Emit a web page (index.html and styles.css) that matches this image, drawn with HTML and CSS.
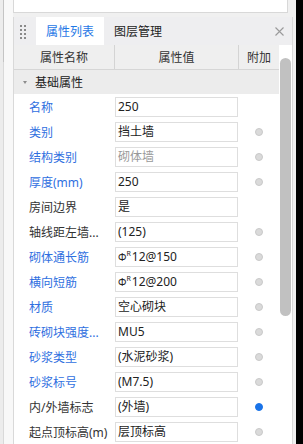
FILE: index.html
```html
<!DOCTYPE html>
<html>
<head>
<meta charset="utf-8">
<link rel="stylesheet" href="styles.css">
</head>
<body>
<div class="gutter"><div class="gutter-dark"></div></div>
<div class="main">
  <div class="top-panel"></div>
  <div class="panel">
    <div class="tabbar">
      <div class="grip"><i></i><i></i><i></i><i></i><i></i><i></i><i></i><i></i></div>
      <div class="tab active">属性列表</div>
      <div class="tab">图层管理</div>
      <div class="close"><svg width="9" height="9" viewBox="0 0 9 9"><path d="M0.5 0.5 L8.5 8.5 M8.5 0.5 L0.5 8.5" stroke="#9a9a9a" stroke-width="1.1" fill="none"/></svg></div>
    </div>
    <div class="content">
      <div class="table">
        <div class="thead">
          <div class="th c1">属性名称</div>
          <div class="th c2">属性值</div>
          <div class="th c3">附加</div>
        </div>
        <div class="group"><span class="caret"></span>基础属性</div>
        <div class="row"><div class="name blue">名称</div><div class="val"><div class="input">250</div></div><div class="extra"></div></div>
        <div class="row"><div class="name blue">类别</div><div class="val"><div class="input">挡土墙</div></div><div class="extra"><span class="dot"></span></div></div>
        <div class="row"><div class="name blue">结构类别</div><div class="val"><div class="input muted">砌体墙</div></div><div class="extra"><span class="dot"></span></div></div>
        <div class="row"><div class="name blue">厚度(mm)</div><div class="val"><div class="input">250</div></div><div class="extra"><span class="dot"></span></div></div>
        <div class="row"><div class="name">房间边界</div><div class="val"><div class="input">是</div></div><div class="extra"></div></div>
        <div class="row"><div class="name">轴线距左墙...</div><div class="val"><div class="input">(125)</div></div><div class="extra"><span class="dot"></span></div></div>
        <div class="row"><div class="name blue">砌体通长筋</div><div class="val"><div class="input"><span class="phi">Φ</span><sup class="r">R</sup>12@150</div></div><div class="extra"><span class="dot"></span></div></div>
        <div class="row"><div class="name blue">横向短筋</div><div class="val"><div class="input"><span class="phi">Φ</span><sup class="r">R</sup>12@200</div></div><div class="extra"><span class="dot"></span></div></div>
        <div class="row"><div class="name blue">材质</div><div class="val"><div class="input">空心砌块</div></div><div class="extra"><span class="dot"></span></div></div>
        <div class="row"><div class="name blue">砖砌块强度...</div><div class="val"><div class="input">MU5</div></div><div class="extra"><span class="dot"></span></div></div>
        <div class="row"><div class="name blue">砂浆类型</div><div class="val"><div class="input">(水泥砂浆)</div></div><div class="extra"><span class="dot"></span></div></div>
        <div class="row"><div class="name blue">砂浆标号</div><div class="val"><div class="input">(M7.5)</div></div><div class="extra"><span class="dot"></span></div></div>
        <div class="row"><div class="name">内/外墙标志</div><div class="val"><div class="input">(外墙)</div></div><div class="extra"><span class="dot on"></span></div></div>
        <div class="row"><div class="name">起点顶标高(m)</div><div class="val"><div class="input">层顶标高</div></div><div class="extra"><span class="dot"></span></div></div>
      </div>
      <div class="scroll"><div class="thumb"></div></div>
    </div>
  </div>
</div>
<div class="edge"></div>
</body>
</html>
```
FILE: styles.css
```css
* { box-sizing: border-box; }
html, body { margin: 0; padding: 0; }
body {
  width: 303px;
  height: 444px;
  overflow: hidden;
  display: flex;
  background: #f0f0f0;
  font-family: "Noto Sans", "Noto Sans CJK SC", sans-serif;
  font-size: 12px;
  color: #222;
}
.gutter {
  width: 13px;
  flex: none;
  background: linear-gradient(to right, #ececec 0 3px, #d9d9d9 3px 4px, #f8f8f8 4px);
}
.gutter-dark {
  margin-left: 3px;
  width: 1px;
  height: 62px;
  background: #c4c4c4;
}
.main {
  width: 283px;
  flex: none;
  display: flex;
  flex-direction: column;
}
.top-panel {
  height: 13px;
  width: 275px;
  background: #fff;
  border: 1px solid #d8d8d8;
  border-top: none;
  margin-bottom: 4px;
}
.panel {
  width: 280px;
  flex: 1;
  display: flex;
  flex-direction: column;
  border-left: 1px solid #d9d9d9;
  border-right: 1px solid #d9d9d9;
}
.tabbar {
  height: 28px;
  flex: none;
  display: flex;
  background: #eeeef0;
}
.grip {
  width: 22px;
  flex: none;
  padding: 8px 0 0 6px;
  display: grid;
  grid-template-columns: 2px 2px;
  grid-auto-rows: 2px;
  column-gap: 2px;
  row-gap: 2px;
  align-content: start;
}
.grip i {
  display: block;
  width: 2px;
  height: 2px;
  background: #8a8a8a;
}
.tab {
  flex: none;
  padding: 0 10px;
  display: flex;
  align-items: center;
  white-space: nowrap;
  font-size: 12px;
  color: #222;
}
.tab.active {
  width: 68px;
  padding: 0;
  justify-content: center;
  background: #fff;
  color: #1f78e6;
}
.close {
  margin-left: auto;
  width: 26px;
  display: flex;
  align-items: center;
  justify-content: center;
}
.content {
  flex: 1;
  display: flex;
  background: #fff;
}
.table {
  width: 265px;
  flex: none;
}
.thead {
  height: 25px;
  display: grid;
  grid-template-columns: 101px 124px 40px;
  background: #efefef;
  border-bottom: 1px solid #d6d6d6;
}
.th {
  display: flex;
  align-items: center;
  justify-content: center;
  font-size: 12px;
  color: #333;
}
.th.c1, .th.c2 { border-right: 1px solid #d4d4d4; }
.group {
  height: 24px;
  display: flex;
  align-items: center;
  background: #ececec;
  font-size: 12px;
  color: #222;
}
.caret {
  width: 0;
  height: 0;
  margin: 0 8px 0 9px;
  border-left: 2.5px solid transparent;
  border-right: 2.5px solid transparent;
  border-top: 3px solid #8c8c8c;
}
.row {
  height: 25px;
  display: grid;
  grid-template-columns: 101px 123px 41px;
}
.name {
  padding-left: 15px;
  display: flex;
  align-items: center;
  font-size: 12px;
  color: #333;
  white-space: nowrap;
  overflow: hidden;
}
.name.blue { color: #2f6fdf; }
.val { padding-top: 3px; }
.input {
  height: 20px;
  border: 1px solid #dedede;
  padding-left: 2px;
  line-height: 18px;
  font-size: 12px;
  color: #222;
  white-space: nowrap;
  overflow: hidden;
}
.input.muted { color: #999; }
.phi { font-size: 10px; }
.r {
  font-size: 7px;
  vertical-align: 5px;
  line-height: 0;
  margin-right: 1px;
}
.extra {
  display: flex;
  align-items: center;
  justify-content: center;
}
.dot {
  width: 8px;
  height: 8px;
  border-radius: 50%;
  background: #dadada;
  border: 1px solid #c9c9c9;
}
.dot.on {
  background: #1a73e8;
  border-color: #1a73e8;
}
.scroll {
  width: 13px;
  flex: none;
  background: #fff;
  padding: 13px 0 0 1px;
}
.thumb {
  width: 11px;
  height: 258px;
  border-radius: 6px;
  background: #c1c1c1;
}
.edge {
  width: 7px;
  flex: none;
  background: #000;
}
```
